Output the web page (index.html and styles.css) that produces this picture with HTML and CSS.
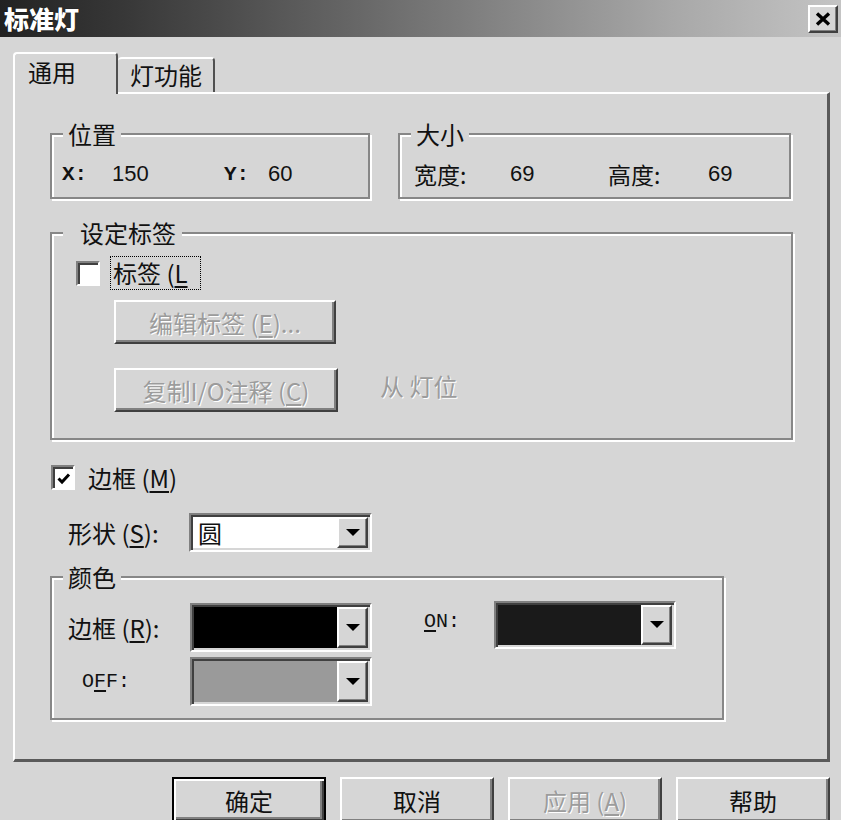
FILE: index.html
```html
<!DOCTYPE html>
<html lang="zh-CN">
<head>
<meta charset="utf-8">
<title>标准灯</title>
<link rel="stylesheet" href="styles.css">
</head>
<body>
<div class="window">
  <div class="titlebar">
    <span class="title">标准灯</span>
    <span class="close-btn">
      <svg width="16" height="14" viewBox="0 0 16 14"><path d="M2 1.5 L14 12.5 M14 1.5 L2 12.5" stroke="#000" stroke-width="3.4" fill="none"/></svg>
    </span>
  </div>
  <div class="body">
    <div class="tabs">
      <div class="tab active">通用</div>
      <div class="tab inactive">灯功能</div>
    </div>
    <div class="panel">
      <div class="row-top">
        <div class="group g-pos">
          <div class="gtitle">位置</div>
          <div class="vals">
            <span class="axis w50">X:</span><span class="num w112">150</span><span class="axis w44">Y:</span><span class="num">60</span>
          </div>
        </div>
        <div class="group g-size">
          <div class="gtitle">大小</div>
          <div class="vals vals-size">
            <span class="w96">宽度:</span><span class="num w98">69</span><span class="w100">高度:</span><span class="num">69</span>
          </div>
        </div>
      </div>

      <div class="group g-label">
        <div class="gtitle gtitle-wide">设定标签</div>
        <div class="check-line">
          <span class="cb"></span>
          <span class="focus-label">标签 (<u>L</u></span>
        </div>
        <div class="btn btn-edit disabled">编辑标签 (<u>E</u>)...</div>
        <div class="copy-line">
          <div class="btn btn-copy disabled">复制I/O注释 (<u>C</u>)</div>
          <span class="from-text">从 灯位</span>
        </div>
      </div>

      <div class="border-line">
        <span class="cb checked">
          <svg width="16" height="16" viewBox="0 0 16 16"><path d="M2.5 7.5 L6 11 L13 3.5" stroke="#000" stroke-width="3" fill="none"/></svg>
        </span>
        <span class="cb-text">边框 (<u>M</u>)</span>
      </div>

      <div class="shape-line">
        <span class="shape-label">形状 (<u>S</u>):</span>
        <div class="combo combo-shape">
          <div class="field field-white">圆</div>
          <div class="arrow"><svg width="14" height="8" viewBox="0 0 14 8"><polygon points="0,0 14,0 7,7" fill="#000"/></svg></div>
        </div>
      </div>

      <div class="group g-color">
        <div class="gtitle">颜色</div>
        <div class="color-grid">
          <span class="clabel">边框 (<u>R</u>):</span>
          <div class="combo combo-color">
            <div class="field field-black"></div>
            <div class="arrow"><svg width="14" height="8" viewBox="0 0 14 8"><polygon points="0,0 14,0 7,7" fill="#000"/></svg></div>
          </div>
          <span class="spacer"></span>
          <span class="clabel mono on-label"><u>O</u>N:</span>
          <div class="combo combo-color combo-on">
            <div class="field field-dark"></div>
            <div class="arrow"><svg width="14" height="8" viewBox="0 0 14 8"><polygon points="0,0 14,0 7,7" fill="#000"/></svg></div>
          </div>
          <span class="clabel mono off-label">O<u>F</u>F:</span>
          <div class="combo combo-color">
            <div class="field field-gray"></div>
            <div class="arrow"><svg width="14" height="8" viewBox="0 0 14 8"><polygon points="0,0 14,0 7,7" fill="#000"/></svg></div>
          </div>
        </div>
      </div>
    </div>

    <div class="buttons">
      <div class="btn dlg-btn default-btn">确定</div>
      <div class="btn dlg-btn">取消</div>
      <div class="btn dlg-btn disabled">应用 (<u>A</u>)</div>
      <div class="btn dlg-btn">帮助</div>
    </div>
  </div>
</div>
</body>
</html>
```

FILE: styles.css
```css
html, body {
  margin: 0;
  padding: 0;
  background: #d6d6d6;
}

body {
  font-family: "Noto Sans CJK SC", "Noto Sans", sans-serif;
  color: #111;
}

u {
  text-decoration: underline;
  text-underline-offset: 3px;
  text-decoration-thickness: 2px;
}

.window {
  width: 841px;
  height: 820px;
  overflow: hidden;
  background: #d6d6d6;
}

/* ---------- title bar ---------- */
.titlebar {
  height: 37px;
  box-sizing: border-box;
  padding: 0 3px 0 4px;
  display: flex;
  align-items: center;
  justify-content: space-between;
  background: linear-gradient(to right, #222 0%, #383838 15%, #747474 50%, #a8a8a8 80%, #c4c4c4 100%);
}

.title {
  color: #fff;
  font-size: 25px;
  font-weight: 900;
  line-height: 37px;
  text-shadow: 0 0 1px #000;
}

.close-btn {
  width: 30px;
  height: 28px;
  box-sizing: border-box;
  background: #d6d6d6;
  border: 2px solid;
  border-color: #fff #404040 #404040 #fff;
  box-shadow: inset -1px -1px 0 #808080;
  display: flex;
  align-items: center;
  justify-content: center;
}

/* ---------- body ---------- */
.body {
  padding: 15px 11px 0 13px;
}

.tabs {
  display: flex;
  align-items: flex-end;
  height: 40px;
}

.tab {
  box-sizing: border-box;
  background: #d6d6d6;
  border-top: 2px solid #fff;
  border-right: 2px solid #505050;
  border-radius: 4px 4px 0 0;
  font-size: 24px;
  color: #111;
}

.tab.active {
  position: relative;
  z-index: 1;
  width: 105px;
  height: 42px;
  margin-bottom: -2px;
  border-left: 2px solid #fff;
  padding-left: 13px;
  line-height: 36px;
}

.tab.inactive {
  width: 97px;
  height: 35px;
  padding-left: 12px;
  line-height: 32px;
}

.panel {
  height: 670px;
  box-sizing: border-box;
  border-top: 2px solid #fff;
  border-left: 2px solid #fff;
  border-right: 3px solid #5a5a5a;
  border-bottom: 3px solid #5a5a5a;
  padding-left: 35px;
  padding-top: 1px;
}

/* ---------- group boxes ---------- */
.group {
  box-sizing: border-box;
  border: 2px solid #878787;
  box-shadow: inset 2px 2px 0 #fff, 2px 2px 0 #fff;
}

.gtitle {
  display: block;
  width: max-content;
  margin: -14px 0 0 11px;
  padding: 0 5px;
  background: #d6d6d6;
  font-size: 24px;
  line-height: 26px;
}

.gtitle-wide {
  padding: 0 6px 0 17px;
}

.row-top {
  display: flex;
  gap: 28px;
  margin-top: 38px;
}

.g-pos {
  width: 320px;
  height: 66px;
}

.g-size {
  width: 393px;
  height: 66px;
}

.vals {
  margin-top: 14px;
  padding-left: 10px;
  height: 26px;
  display: flex;
  align-items: center;
  font-size: 23px;
}

.vals-size {
  padding-left: 14px;
}

.axis {
  font-family: "Liberation Mono", "DejaVu Sans Mono", monospace;
  font-size: 21px;
  font-weight: 700;
}

.num {
  font-family: "Liberation Sans", Arial, sans-serif;
  font-size: 22px;
}

.mono {
  font-family: "Liberation Mono", "DejaVu Sans Mono", monospace;
  font-size: 20px;
}

.w50 { width: 50px; }
.w112 { width: 112px; }
.w44 { width: 44px; }
.w96 { width: 96px; }
.w98 { width: 98px; }
.w100 { width: 100px; }

.g-label {
  width: 743px;
  height: 208px;
  margin-top: 33px;
}

.check-line {
  display: flex;
  align-items: center;
  height: 34px;
  margin: 10px 0 0 24px;
}

.cb {
  width: 24px;
  height: 25px;
  box-sizing: border-box;
  border: 2px solid;
  border-color: #808080 #fff #fff #808080;
  box-shadow: inset 2px 2px 0 #404040;
  background: #fff;
  display: flex;
  align-items: center;
  justify-content: center;
  flex: none;
}

.cb.checked svg {
  margin: 2px 0 0 2px;
}

.focus-label {
  margin-left: 10px;
  padding: 0 12px 0 2px;
  border: 1px dotted #000;
  font-size: 24px;
  line-height: 32px;
}

.btn {
  box-sizing: border-box;
  background: #d6d6d6;
  border: 2px solid;
  border-color: #fff #404040 #404040 #fff;
  box-shadow: inset -2px -2px 0 #808080;
  display: flex;
  align-items: center;
  justify-content: center;
  font-size: 24px;
  color: #111;
}

.btn.disabled,
.from-text {
  color: #9c9c9c;
  text-shadow: 1px 1px 0 #fff;
}

.btn-edit {
  width: 222px;
  height: 44px;
  margin: 10px 0 0 62px;
}

.copy-line {
  display: flex;
  align-items: center;
  margin: 24px 0 0 62px;
}

.btn-copy {
  width: 224px;
  height: 44px;
}

.from-text {
  margin-left: 42px;
  font-size: 24px;
  margin-top: -10px;
}

/* ---------- border / shape ---------- */
.border-line {
  display: flex;
  align-items: center;
  margin: 25px 0 0 1px;
  height: 25px;
}

.cb-text {
  margin-left: 13px;
  font-size: 24px;
}

.shape-line {
  display: flex;
  align-items: center;
  margin-top: 23px;
}

.shape-label {
  width: 121px;
  padding-left: 18px;
  font-size: 24px;
  flex: none;
}

.combo {
  box-sizing: border-box;
  display: flex;
  border: 2px solid;
  border-color: #808080 #fff #fff #808080;
  padding: 2px;
  background: #d6d6d6;
  box-shadow: inset 2px 2px 0 #404040;
}

.combo-shape {
  width: 183px;
  height: 39px;
}

.field {
  flex: 1;
}

.field-white {
  background: #fff;
  font-size: 24px;
  line-height: 31px;
  padding-left: 5px;
}

.field-black { background: #000; }
.field-dark { background: #1a1a1a; }
.field-gray { background: #9a9a9a; }

.arrow {
  width: 31px;
  flex: none;
  box-sizing: border-box;
  background: #d6d6d6;
  border: 2px solid;
  border-color: #fff #404040 #404040 #fff;
  box-shadow: inset -1px -1px 0 #808080;
  display: flex;
  align-items: center;
  justify-content: center;
}

/* ---------- colour group ---------- */
.g-color {
  width: 674px;
  height: 144px;
  margin-top: 24px;
}

.color-grid {
  display: grid;
  grid-template-columns: 122px 182px 52px 70px 182px;
  grid-template-rows: 49px 49px;
  row-gap: 5px;
  margin-top: 13px;
  padding-left: 16px;
  align-items: center;
}

.clabel {
  font-size: 24px;
  align-self: center;
}

.clabel.mono {
  font-size: 20px;
}

.on-label {
  margin-top: -12px;
}

.off-label {
  padding-left: 14px;
  grid-column: 1;
}

.combo-color {
  width: 182px;
  height: 49px;
}

.combo-on {
  height: 48px;
  margin-top: -6px;
}

/* ---------- dialog buttons ---------- */
.buttons {
  display: flex;
  justify-content: flex-end;
  gap: 14px;
  margin-top: 15px;
}

.dlg-btn {
  width: 154px;
  height: 46px;
}

.default-btn {
  border: 2px solid #000;
  box-shadow: inset 2px 2px 0 #fff, inset -2px -2px 0 #404040, inset -4px -4px 0 #808080;
}
```
